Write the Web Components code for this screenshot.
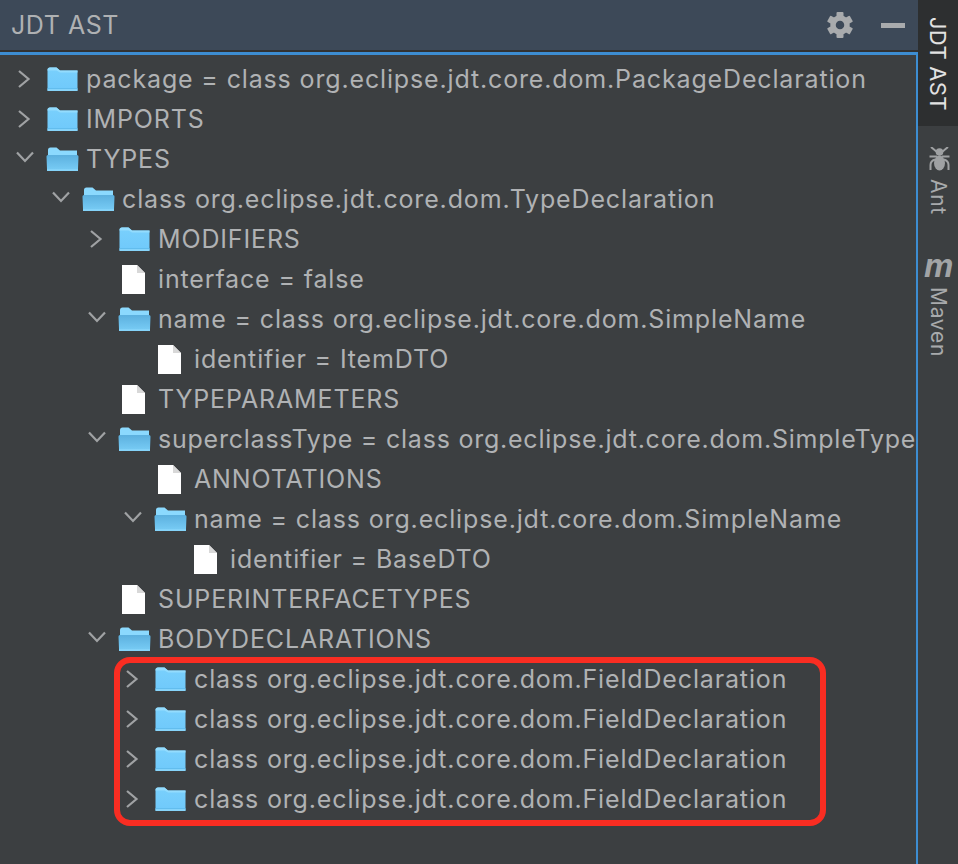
<!DOCTYPE html>
<html><head><meta charset="utf-8"><style>
html,body{margin:0;padding:0;background:#3c3f41;height:100%;overflow:hidden}
body{font-family:Inter,"Noto Sans",sans-serif}
</style></head><body>
<tool-window>
  <tree-row depth="0" kind="closed">package = class org.eclipse.jdt.core.dom.PackageDeclaration</tree-row>
  <tree-row depth="0" kind="closed">IMPORTS</tree-row>
  <tree-row depth="0" kind="open">TYPES</tree-row>
  <tree-row depth="1" kind="open">class org.eclipse.jdt.core.dom.TypeDeclaration</tree-row>
  <tree-row depth="2" kind="closed">MODIFIERS</tree-row>
  <tree-row depth="2" kind="leaf">interface = false</tree-row>
  <tree-row depth="2" kind="open">name = class org.eclipse.jdt.core.dom.SimpleName</tree-row>
  <tree-row depth="3" kind="leaf">identifier = ItemDTO</tree-row>
  <tree-row depth="2" kind="leaf">TYPEPARAMETERS</tree-row>
  <tree-row depth="2" kind="open" style="letter-spacing:.77px">superclassType = class org.eclipse.jdt.core.dom.SimpleType</tree-row>
  <tree-row depth="3" kind="leaf">ANNOTATIONS</tree-row>
  <tree-row depth="3" kind="open">name = class org.eclipse.jdt.core.dom.SimpleName</tree-row>
  <tree-row depth="4" kind="leaf">identifier = BaseDTO</tree-row>
  <tree-row depth="2" kind="leaf">SUPERINTERFACETYPES</tree-row>
  <tree-row depth="2" kind="open">BODYDECLARATIONS</tree-row>
  <mark-group>
    <tree-row depth="3" kind="closed">class org.eclipse.jdt.core.dom.FieldDeclaration</tree-row>
    <tree-row depth="3" kind="closed">class org.eclipse.jdt.core.dom.FieldDeclaration</tree-row>
    <tree-row depth="3" kind="closed">class org.eclipse.jdt.core.dom.FieldDeclaration</tree-row>
    <tree-row depth="3" kind="closed">class org.eclipse.jdt.core.dom.FieldDeclaration</tree-row>
  </mark-group>
  <side-tab slot="side" active style="height:126px;padding-top:17px">JDT AST</side-tab>
  <side-tab slot="side" style="height:110px;padding-top:21px" icon="ant">Ant</side-tab>
  <side-tab slot="side" style="padding-top:18px" icon="m">Maven</side-tab>
</tool-window>
<script>
function def(name, css, html){
  customElements.define(name, class extends HTMLElement{
    connectedCallback(){
      if(this.shadowRoot) return;
      const r=this.attachShadow({mode:'open'});
      r.innerHTML='<style>'+css+'</style>'+(typeof html==='function'?html(this):html);
    }
  });
}
const closedFolder=`<svg width="31" height="25" viewBox="0 0 31 25"><defs><linearGradient id="c" x1="0" y1="0" x2="0" y2="1"><stop offset="0" stop-color="#7ad0fc"/><stop offset="1" stop-color="#6fc9fb"/></linearGradient></defs>
<path d="M.5 3Q.5 .5 3 .5H9.500L13 3.500H30.500V23Q30.500 24 29.500 24H1.500Q.5 24 .5 23Z" fill="url(#c)"/>
<path d="M.5 3Q.5 .5 3 .5H9.500L13 3.500H30.500V5.500H13L9.500 3.500H.5Z" fill="#93dcfe"/>
<rect x=".5" y="21" width="30" height="1" fill="#62bdee"/><rect x=".5" y="22" width="30" height="2" fill="#86d4fa"/></svg>`;
const openFolder=`<svg width="33" height="25" viewBox="0 0 33 25"><defs><linearGradient id="o" x1="0" y1="0" x2="0" y2="1"><stop offset="0" stop-color="#5cb0de"/><stop offset=".55" stop-color="#6cc0ec"/><stop offset="1" stop-color="#79cdf6"/></linearGradient></defs>
<path d="M2 3Q2 .5 4.500 .5H10.500L14 3.500H31V9H2Z" fill="#8bd9fe"/>
<path d="M.5 9.500Q.5 8 2 8H31Q32.500 8 32.500 9.500L32 22Q32 24 30 24H3Q1 24 1 22Z" fill="url(#o)"/>
<rect x="1" y="22" width="31" height="2" fill="#84d3f9"/></svg>`;
const leaf=`<svg width="23" height="29" viewBox="0 0 23 29"><path d="M0 0H15L23 8V29H0Z" fill="#fff"/><path d="M15 0L23 8H15Z" fill="#d8d8d8"/></svg>`;
const right=`<svg width="16" height="18" viewBox="0 0 16 18"><path d="M2 1L11.500 9L2 17" fill="none" stroke="#a0a2a4" stroke-width="2.200"/></svg>`;
const down=`<svg width="18" height="16" viewBox="0 0 18 16"><path d="M1 1.500L9 10L17 1.500" fill="none" stroke="#a0a2a4" stroke-width="2.200"/></svg>`;

def('tree-row',`:host{display:flex;align-items:center;height:40px;white-space:nowrap;font-size:25px;letter-spacing:.85px;color:#b0b2b4;padding-left:calc(var(--d)*36px)}
.arrow{width:47px;flex:none;display:flex;justify-content:center;box-sizing:border-box;padding-left:13px;padding-right:11px;align-items:center;height:40px}
.icon{width:39px;flex:none;display:flex;align-items:center;height:40px}
.open{margin-left:-1px;width:40px}
.leaf{margin-left:50px;width:36px}`,
 h=>{
  const k=h.getAttribute('kind');
  h.style.setProperty('--d',h.getAttribute('depth'));
  if(k==='leaf') return `<span class="icon leaf">${leaf}</span><slot></slot>`;
  return `<span class="arrow">${k==='open'?down:right}</span><span class="icon ${k==='open'?'open':''}">${k==='open'?openFolder:closedFolder}</span><slot></slot>`;
 });

def('mark-group',`:host{display:block;position:relative}
.box{position:absolute;left:114px;top:-2px;width:712px;height:169px;box-sizing:border-box;border:6px solid #f92d22;border-radius:16px;pointer-events:none}`,
 `<slot></slot><div class="box"></div>`);

const icons={
 ant:`<svg width="21" height="24" viewBox="0 0 21 24" style="display:block;margin:0 auto 8px;transform:translateX(1px)"><g fill="#9fa1a3"><circle cx="10.500" cy="5" r="3.800"/><ellipse cx="10.500" cy="16" rx="5.500" ry="7.500"/></g><g fill="none" stroke="#9fa1a3" stroke-width="2"><path d="M2 0L8 5M19 0L13 5M.5 9.500H8M20.500 9.500H13M1.500 23V18Q1.500 14 6 12.500M19.500 23V18Q19.500 14 15 12.500"/></g></svg>`,
 m:`<div style="font:italic 700 33px/24px 'Liberation Sans',sans-serif;color:#a2a4a6;height:24px;margin-bottom:9px;text-align:center;transform:translateX(1px)">m</div>`
};
def('side-tab',`:host{display:flex;flex-direction:column;align-items:center;box-sizing:border-box;width:40px;color:#a8aaac;font-size:21px;letter-spacing:.7px}
:host([active]){background:#2d2f30;color:#e2e2e2;font-size:22px;letter-spacing:.3px}
.t{writing-mode:vertical-rl;white-space:nowrap;line-height:40px}`,
 h=>{const i=h.getAttribute('icon');return (i?icons[i]:'')+`<span class="t"><slot></slot></span>`});

const teeth=[0,60,120,180,240,300].map(a=>`<rect x="9.500" y="0" width="7" height="7" rx="1" transform="rotate(${a} 13 13)"/>`).join('');
def('tool-window',`:host{display:flex;width:958px;height:864px;background:#3c3f41;overflow:hidden}
.main{width:918px;flex:none;display:flex;flex-direction:column}
.head{height:50px;flex:none;background:#3d4958;display:flex;align-items:center;padding:0 10px 0 11px;color:#afb1b3;font-size:25px;letter-spacing:.55px}
.title{flex:1}
.sep{height:2px;background:#323232;flex:none}
.tree{flex:1;border-top:3px solid #3d8dd1;border-right:2px solid #3d8dd1;padding-top:4px;min-height:0;overflow:hidden}
.gear{margin-right:28px;display:block}
.min{width:24px;height:5px;background:#a9abad;margin-right:3px}
.side{width:40px;flex:none;display:flex;flex-direction:column;background:#3c3f41}`,
 `<div class="main"><div class="head"><span class="title">JDT AST</span>
 <svg class="gear" width="26" height="26" viewBox="0 0 26 26"><g fill="#a9abad">${teeth}</g><circle cx="13" cy="13" r="7" fill="none" stroke="#a9abad" stroke-width="5.500"/></svg>
 <span class="min"></span></div><div class="sep"></div><div class="tree"><slot></slot></div></div>
 <div class="side"><slot name="side"></slot></div>`);
</script>
</body></html>
